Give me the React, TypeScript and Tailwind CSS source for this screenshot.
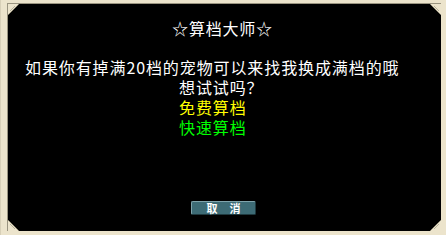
const FONT = '"Noto Sans CJK SC", "Noto Sans", sans-serif';

function Corner({ className }: { className: string }) {
  return (
    <svg width="11" height="11" viewBox="0 0 11 11" className={`absolute ${className}`}>
      <polygon points="0,0 11,0 0,11" fill="#ece4cc" />
      <line x1="10.5" y1="0.5" x2="0.5" y2="10.5" stroke="#8a8470" strokeWidth="1" />
      <line x1="7" y1="2" x2="2" y2="7" stroke="#b8b29c" strokeWidth="1" />
    </svg>
  );
}

export default function App() {
  return (
    <div
      className="w-[446px] h-[235px] bg-[#ece4cc] pt-[3px] pl-[6px] pr-[5px] pb-[4px] border-l border-[#d8d0b8]"
      style={{ fontFamily: FONT }}
    >
      <div className="relative w-full h-full bg-black border-l border-t border-[#9a9480] flex flex-col">
        <Corner className="left-0 top-0" />
        <Corner className="right-0 top-0 rotate-90" />
        <Corner className="right-0 bottom-0 rotate-180" />
        <Corner className="left-0 bottom-0 -rotate-90" />

        <div className="mt-[14px] text-center text-white text-[16px] leading-[20px] tracking-[0.8px] pr-[4px]">
          ☆算档大师☆
        </div>

        <div className="mt-[19px] flex flex-col text-[16px] leading-[20px] tracking-[0.9px]">
          <p className="pl-[17px] text-white">如果你有掉满20档的宠物可以来找我换成满档的哦</p>
          <p className="pl-[171px] text-white">想试试吗？</p>
          <p className="pl-[171px] text-[#ffff00]">免费算档</p>
          <p className="pl-[171px] text-[#00ff00]">快速算档</p>
        </div>

        <div className="mt-auto mb-[16px] flex justify-center pr-[2px]">
          <button className="w-[65px] h-[14px] bg-[#3d6b75] rounded-[2px] border border-t-[#7fa3ab] border-l-[#7fa3ab] border-r-[#1f3a40] border-b-[#1f3a40] flex items-center justify-center text-white text-[11px] leading-none font-bold tracking-[12px] pl-[12px]">
            取消
          </button>
        </div>
      </div>
    </div>
  );
}
